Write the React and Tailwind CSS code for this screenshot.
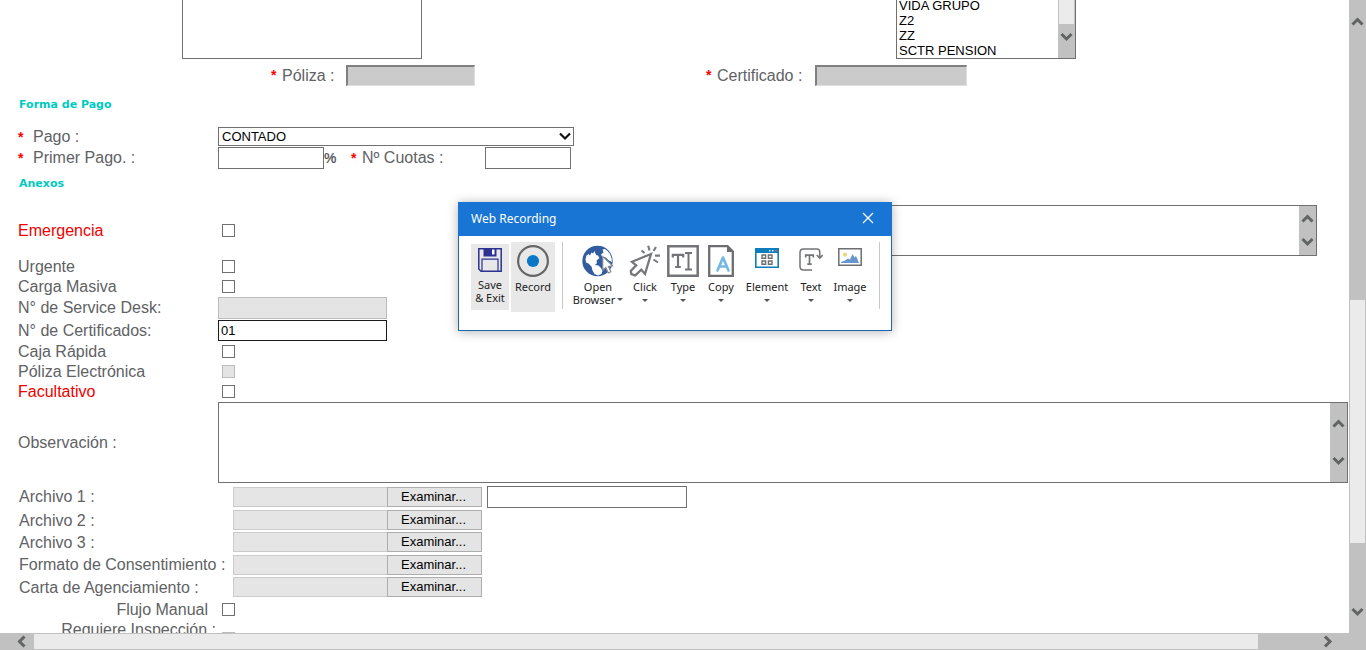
import React from "react";

const LABEL = "text-base leading-5 text-[#606264] whitespace-nowrap";
const FIELD = "border border-[#707070] bg-white px-[3px] text-[13px] text-black outline-none rounded-none";
const SUNKEN = "h-[21px] border-t-2 border-r border-b border-l-2 border-t-[#808080] border-r-[#dedede] border-b-[#dedede] border-l-[#808080] bg-[#cbcbcb]";

function Chevron({ dir }) {
  const points = {
    up: "1.5,8.5 6.5,3.5 11.5,8.5",
    down: "1.5,4 6.5,9 11.5,4",
    left: "8.5,1.5 3.5,6.5 8.5,11.5",
    right: "4,1.5 9,6.5 4,11.5",
  };
  return (
    <svg width="13" height="13" viewBox="0 0 13 13" aria-hidden="true" className="shrink-0">
      <polyline points={points[dir]} fill="none" stroke="#606464" strokeWidth="3" />
    </svg>
  );
}

function Star() {
  return <span className="w-[6px] text-sm leading-5 font-bold text-[#ff0000]">*</span>;
}

function Heading({ children, className }) {
  return (
    <h2 className={`flex items-center pl-[19px] font-['DejaVu_Sans',sans-serif] text-[11px] font-black text-[#00cabf] ${className}`}>
      {children}
    </h2>
  );
}

function Check({ id, disabled }) {
  return (
    <input
      id={id}
      type="checkbox"
      disabled={disabled}
      className="ml-1 size-[13px] shrink-0 appearance-none border border-[#707070] bg-white checked:bg-[#707070] disabled:border-[#bcbcbc] disabled:bg-[#e4e4e4]"
    />
  );
}

function Row({ id, label, red, height, children }) {
  return (
    <div className={`flex items-center pl-[18px] ${height}`}>
      <label htmlFor={id} className={`w-50 shrink-0 pt-px text-base leading-5 whitespace-nowrap ${red ? "text-[#f00000]" : "text-[#606264]"}`}>
        {label}
      </label>
      {children}
    </div>
  );
}

function Memo({ id, label, className, pad }) {
  return (
    <div className={`flex border border-[#707070] bg-white ${className}`}>
      <textarea id={id} aria-label={label} className="min-w-0 flex-1 resize-none bg-transparent px-1 text-[13px] outline-none" />
      <div className={`flex w-[17px] flex-col items-center justify-between bg-[#c1c1c1] ${pad}`}>
        <Chevron dir="up" />
        <Chevron dir="down" />
      </div>
    </div>
  );
}

function FileRow({ id, label, height, children }) {
  return (
    <div className={`flex items-center pl-[19px] ${height}`}>
      <label htmlFor={id} className={`w-[214px] shrink-0 pt-px ${LABEL}`}>{label}</label>
      <input id={id} readOnly className="h-5 w-[154px] shrink-0 border border-r-0 border-[#cbcbcb] bg-[#e5e5e5] outline-none" />
      <button type="button" className="h-5 w-[95px] shrink-0 border border-[#adadad] bg-[#e4e4e4] pr-[2px] text-[13px] leading-4 text-black">
        Examinar...
      </button>
      {children}
    </div>
  );
}

function SaveIcon() {
  return (
    <svg width="24" height="24" viewBox="0 0 24 24" fill="none">
      <path d="M.8.8h22.4v22.4H3L.8 21z" stroke="#2d3192" strokeWidth="1.5" />
      <path d="M5.5 0h13v8.500h-13z" fill="#2d3192" />
      <path d="M14 1.500h2.500v5H14z" fill="#fff" />
      <path d="M4 23V11.200h16V23" stroke="#2d3192" strokeWidth="1.200" />
    </svg>
  );
}

function RecordIcon() {
  return (
    <svg width="32" height="32" viewBox="0 0 32 32">
      <circle cx="16" cy="16" r="14.9" fill="none" stroke="#666" strokeWidth="2.2" />
      <circle cx="16" cy="16" r="6.1" fill="#0a78c4" />
    </svg>
  );
}

function GlobeIcon() {
  return (
    <svg width="32" height="32" viewBox="0 0 32 32">
      <circle cx="15.500" cy="16" r="15.200" fill="#315c9f" />
      <path d="M3.500 14 4.500 10.500 6.500 9l1.500 1.500L9.500 7.500l1.500 1L12.500 6l1.500 4 2 .5 1.500 2.500-3 2.500.5 2.500-2 2 3.500.5 2.500 2.500 1.500 3-1 3-3.500 1.500-3.500-1.500-2-3.500-1-4-3-3-2.500-1z" fill="#fff" />
      <path d="M20.500 4.500 23 4l2.500 2 2.500 3 1.500 4 .5 4-3-1.500-4-3.500-2.500.5-1.500-3 2.500-2z" fill="#fff" />
      <path d="M20.800 11.500v13.700l3-2.700 2.500 5.400 2.600-1.200-2.500-5.300 4.200-.5z" fill="#fff" stroke="#85898f" strokeWidth="1.100" />
    </svg>
  );
}

function ClickIcon() {
  return (
    <svg width="32" height="32" viewBox="0 0 32 32" fill="none" stroke="#77787b">
      <path d="M22 9 3 16.800l4.200 3.500-5.400 5.600.5 3.300 4 1.200 6-5.700 3.700 4.300z" strokeWidth="2.300" />
      <path d="M12.500 5.500 15.500 8M19.200.8l1.300 4.700M27 2l-2.500 4M26 10.600h5M24.500 14.500l4.500 3" strokeWidth="2.100" />
    </svg>
  );
}

function TypeIcon() {
  return (
    <svg width="32" height="32" viewBox="0 0 32 32" fill="none" stroke="#737477">
      <path d="M1.300 1.300h29.400v29.400H1.300z" strokeWidth="2.500" />
      <path d="M5.800 12.500V9.800h10.400v2.700M11 9.800V22M8.200 22h5.600" strokeWidth="2.200" />
      <path d="M18 8h7M21.500 8v16.500M18 24.500h7" strokeWidth="2" />
    </svg>
  );
}

function CopyIcon() {
  return (
    <svg width="26" height="32" viewBox="0 0 26 32" fill="none">
      <path d="M1.200 1.200h18.300l5.300 5.300v24.300H1.200z" stroke="#6c6d70" strokeWidth="2.300" />
      <path d="M19 0v7h7z" fill="#6c6d70" />
      <path d="M9.500 25.500 15 12.500l5.500 13M11.300 21.500h7.400" stroke="#73b8e2" strokeWidth="2.600" strokeLinecap="round" strokeLinejoin="round" />
    </svg>
  );
}

function ElementIcon() {
  return (
    <svg width="24" height="20" viewBox="0 0 24 20" fill="none">
      <path d="M.8.8h22.400v18.400H.8z" fill="#fff" stroke="#0e7dbc" strokeWidth="1.600" />
      <path d="M0 0h24v5H0z" fill="#0e7dbc" />
      <path d="M14 2h1.500v1.500H14zM17 2h1.500v1.500H17z" fill="#d9ecf7" />
      <path d="M20.200 2h1.500v1.500h-1.500z" fill="#ef5a62" />
      <path d="M7 7h3.600v3.200H7zM13.400 7H17v3.200h-3.600zM7 13h3.600v3.200H7zM13.400 13H17v3.200h-3.600z" stroke="#6d6e71" strokeWidth="1.400" />
    </svg>
  );
}

function TextIcon() {
  return (
    <svg width="24" height="24" viewBox="0 0 24 24" fill="none" stroke="#737477">
      <path d="M13 22H4.500Q1 22 1 18.500v-14Q1 1 4.500 1H18q2.800 0 2.800 3v5" strokeWidth="1.500" />
      <path d="m17.800 7 3 3 3-3" strokeWidth="1.700" />
      <path d="M6.700 9.500V7.200h7.600v2.300M10.500 7.200v9M8.300 16.200h4.400" strokeWidth="1.700" />
    </svg>
  );
}

function ImageIcon() {
  return (
    <svg width="24" height="18" viewBox="0 0 24 18">
      <path d="M.8.800h22.400v16.400H.8z" fill="#fff" stroke="#6d6e71" strokeWidth="1.500" />
      <circle cx="7" cy="6.500" r="2" fill="#eed476" />
      <path d="M3 15v-1l4-1.500 3-2 2 1L14.500 6l2 3.500L18 8l3 7z" fill="#6796cf" />
    </svg>
  );
}

const TOOLS = [
  { label: "Click", icon: ClickIcon, width: "w-[38px]", pad: "" },
  { label: "Type", icon: TypeIcon, width: "w-[38px]", pad: "" },
  { label: "Copy", icon: CopyIcon, width: "w-[38px]", pad: "" },
  { label: "Element", icon: ElementIcon, width: "w-[54px]", pad: "pt-[3px]" },
  { label: "Text", icon: TextIcon, width: "w-[34px]", pad: "pt-[3px]" },
  { label: "Image", icon: ImageIcon, width: "w-[44px]", pad: "pt-[3px]" },
];

function Caret() {
  return (
    <svg width="6" height="3" viewBox="0 0 6 3" aria-hidden="true" className="shrink-0">
      <path d="M0 0h6L3 3z" fill="#555" />
    </svg>
  );
}

function Recorder() {
  return (
    <section
      aria-label="Web Recording"
      className="absolute top-[202px] left-[458px] flex h-[129px] w-[434px] flex-col border border-[#1c68b5] bg-white font-['Noto_Sans',sans-serif] text-[11px] leading-[13px] text-[#222] shadow-[0_1px_10px_rgba(0,0,0,0.3)]"
    >
      <header className="-mx-px -mt-px flex h-[34px] items-center justify-between bg-[#1975d3] pr-[18px] pb-[2px] pl-[13px] text-white">
        <h1 className="text-[12px]">Web Recording</h1>
        <button type="button" aria-label="Close" className="size-3">
          <svg width="12" height="12" viewBox="0 0 12 12">
            <path d="m1 1 10 10M11 1 1 11" stroke="#fff" strokeWidth="1.200" />
          </svg>
        </button>
      </header>
      <div className="flex items-start pt-[6px] pl-3">
        <button type="button" className="mt-[2px] mr-[2px] flex h-[66px] w-[38px] flex-col items-center bg-[#e8e8e8] pt-1">
          <SaveIcon />
          <span className="mt-[6px] whitespace-nowrap">Save<br />&amp; Exit</span>
        </button>
        <button type="button" className="flex h-[70px] w-[44px] flex-col items-center bg-[#e8e8e8] pt-[3px]">
          <RecordIcon />
          <span className="mt-[3px]">Record</span>
        </button>
        <div className="mx-[7px] h-[67px] w-px bg-[#c8c8c8]" />
        <button type="button" className="flex w-[56px] flex-col items-center pt-[3px]">
          <GlobeIcon />
          <span className="mt-[3px]">Open</span>
          <span className="flex items-center gap-[2px]">Browser<Caret /></span>
        </button>
        {TOOLS.map(({ label, icon: Icon, width, pad }) => (
          <button key={label} type="button" className={`flex flex-col items-center pt-[3px] ${width}`}>
            <span className={`h-[35px] ${pad}`}><Icon /></span>
            <span>{label}</span>
            <span className="flex h-[14px] items-center"><Caret /></span>
          </button>
        ))}
        <div className="ml-[7px] h-[67px] w-px bg-[#c8c8c8]" />
      </div>
    </section>
  );
}

export default function App() {
  return (
    <div className="relative flex h-screen flex-col overflow-hidden bg-white font-['Liberation_Sans',Arial,sans-serif]">
      <div className="flex min-h-0 flex-1">
        <form className="min-w-0 flex-1 overflow-hidden" onSubmit={(e) => e.preventDefault()}>
          <div className="flex h-[59px] items-end overflow-hidden pl-[182px]">
            <textarea aria-label="Detalle" className={`h-20 w-60 shrink-0 resize-none ${FIELD}`} />
            <div className="ml-[474px] flex h-[62px] w-[180px] shrink-0 border border-[#707070]">
              <select multiple size={4} aria-label="Ramo" className="h-[60px] flex-1 appearance-none overflow-hidden bg-white text-[13px] text-black outline-none">
                {["VIDA GRUPO", "Z2", "ZZ", "SCTR PENSION"].map((name) => (
                  <option key={name} className="h-[15px] min-h-0 p-0 pl-[2px] leading-[15px]">{name}</option>
                ))}
              </select>
              <div className="flex w-[17px] flex-col items-center bg-[#c1c1c1]">
                <div className="mb-[6px] h-[26px] w-[15px] bg-[#ebebeb]" />
                <Chevron dir="down" />
              </div>
            </div>
          </div>

          <div className="flex h-8 items-center pl-[271px]">
            <Star />
            <label htmlFor="poliza" className={`ml-[5px] w-16 pt-px ${LABEL}`}>Póliza :</label>
            <input id="poliza" disabled className={`w-[129px] ${SUNKEN}`} />
            <span className="ml-[231px] flex"><Star /></span>
            <label htmlFor="certificado" className={`ml-[5px] w-[98px] pt-px ${LABEL}`}>Certificado :</label>
            <input id="certificado" disabled className={`w-[152px] ${SUNKEN}`} />
          </div>

          <Heading className="mb-[7px] h-7">Forma de Pago</Heading>

          <div className="flex h-[21px] items-center pl-[18px]">
            <span className="flex w-[15px]"><Star /></span>
            <label htmlFor="pago" className={`w-[185px] ${LABEL}`}>Pago :</label>
            <div className="relative w-[356px]">
              <select id="pago" className={`block h-[19px] w-full appearance-none leading-4 ${FIELD}`}>
                <option>CONTADO</option>
              </select>
              <svg width="12" height="9" viewBox="0 0 12 9" className="pointer-events-none absolute top-[5px] right-[3px]" aria-hidden="true">
                <path d="m1 1.500 5 5 5-5" fill="none" stroke="#111" strokeWidth="2.200" />
              </svg>
            </div>
          </div>
          <div className="flex h-[22px] items-center pl-[18px]">
            <span className="flex w-[15px]"><Star /></span>
            <label htmlFor="primer" className={`w-[185px] ${LABEL}`}>Primer Pago. :</label>
            <input id="primer" className={`h-[22px] w-[106px] ${FIELD}`} />
            <span className="w-[27px] text-sm font-bold text-[#606264]">%</span>
            <Star />
            <label htmlFor="cuotas" className={`ml-[5px] w-[123px] ${LABEL}`}>Nº Cuotas :</label>
            <input id="cuotas" className={`h-[22px] w-[86px] ${FIELD}`} />
          </div>

          <Heading className="mb-[6px] h-[30px]">Anexos</Heading>

          <Row id="emergencia" label="Emergencia" red height="h-[51px]">
            <Check id="emergencia" />
            <Memo id="motivo" label="Motivo de emergencia" className="mr-8 ml-[265px] h-full flex-1" pad="py-[7px]" />
          </Row>
          <Row id="urgente" label="Urgente" height="h-5"><Check id="urgente" /></Row>
          <Row id="masiva" label="Carga Masiva" height="h-5"><Check id="masiva" /></Row>
          <Row id="desk" label="N° de Service Desk:" height="h-[23px]">
            <input id="desk" disabled className="h-[22px] w-[169px] border border-[#bcbcbc] bg-[#e4e4e4]" />
          </Row>
          <Row id="certs" label="N° de Certificados:" height="h-[22px]">
            <input id="certs" defaultValue="01" className="h-[21px] w-[169px] border border-[#1a1a1a] bg-white px-[2px] text-[13px] text-black outline-none" />
          </Row>
          <Row id="caja" label="Caja Rápida" height="h-5"><Check id="caja" /></Row>
          <Row id="electronica" label="Póliza Electrónica" height="h-5"><Check id="electronica" disabled /></Row>
          <Row id="facultativo" label="Facultativo" red height="h-5"><Check id="facultativo" /></Row>
          <Row id="observacion" label="Observación :" height="h-[83px]">
            <Memo id="observacion" className="mr-px h-[81px] flex-1" pad="py-[15px]" />
          </Row>

          <FileRow id="archivo1" label="Archivo 1 :" height="h-[25px]">
            <input aria-label="Descripción del archivo 1" className={`ml-[5px] h-[22px] w-50 ${FIELD}`} />
          </FileRow>
          <FileRow id="archivo2" label="Archivo 2 :" height="h-[22px]" />
          <FileRow id="archivo3" label="Archivo 3 :" height="h-[22px]" />
          <FileRow id="formato" label="Formato de Consentimiento :" height="h-[23px]" />
          <FileRow id="carta" label="Carta de Agenciamiento :" height="h-[22px]" />
          <div className="flex h-[22px] items-center">
            <label htmlFor="flujo" className={`w-[218px] pt-px pr-[10px] text-right ${LABEL}`}>Flujo Manual</label>
            <Check id="flujo" />
          </div>
          <div className="flex h-5 items-start">
            <label htmlFor="inspeccion" className={`w-[218px] pr-[2px] text-right ${LABEL}`}>Requiere Inspección :</label>
            <span className="flex pt-3"><Check id="inspeccion" disabled /></span>
          </div>
        </form>

        <div className="flex w-[17px] shrink-0 flex-col items-center bg-[#c1c1c1] pt-4 pb-[15px]" aria-hidden="true">
          <Chevron dir="up" />
          <div className="grow-[271]" />
          <div className="w-[15px] grow-[243] bg-[#ebebeb]" />
          <div className="grow-[62]" />
          <Chevron dir="down" />
        </div>
      </div>

      <div className="flex h-[17px] shrink-0 items-center bg-[#c1c1c1] pr-8 pl-4" aria-hidden="true">
        <Chevron dir="left" />
        <div className="ml-[5px] h-[15px] grow-[1224] bg-[#ebebeb]" />
        <div className="grow-[63]" />
        <Chevron dir="right" />
      </div>

      <Recorder />
    </div>
  );
}
